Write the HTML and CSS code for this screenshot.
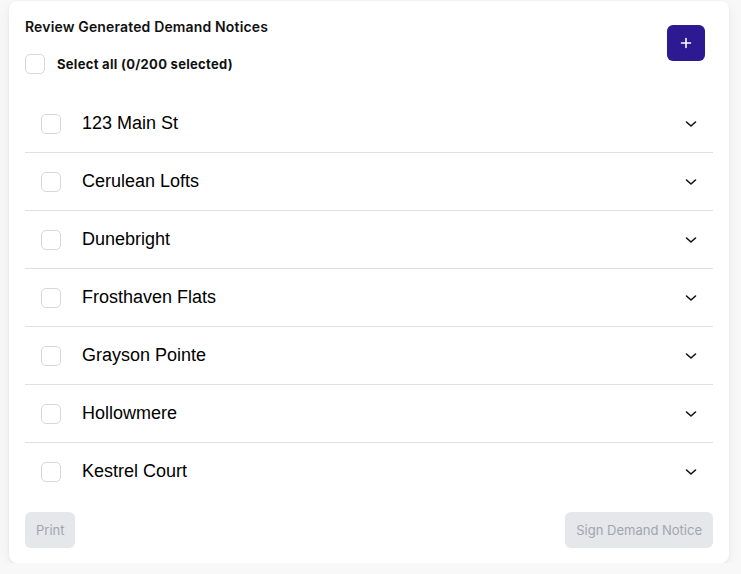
FILE: index.html
```html
<!DOCTYPE html>
<html lang="en">
  <head>
    <meta charset="UTF-8" />
    <meta name="viewport" content="width=device-width, initial-scale=1.0" />
    <title>Review Generated Demand Notices</title>
    <link rel="stylesheet" href="styles.css">
  </head>

  <body>
    <div class="card">
      <div class="card-header">
        <div class="header-text">
          <h2 class="title">Review Generated Demand Notices</h2>
          <label class="select-all">
            <span class="checkbox"></span>
            <span>Select all (0/200 selected)</span>
          </label>
        </div>
        <button class="add-button" aria-label="Add">
          <svg width="12" height="12" viewBox="0 0 12 12">
            <path d="M6 1.5v9M1.5 6h9" stroke="#fff" stroke-width="1.6" stroke-linecap="round" />
          </svg>
        </button>
      </div>

      <ul class="notice-list">
        <li class="notice-row">
          <span class="checkbox"></span>
          <span class="notice-name">123 Main St</span>
          <svg class="chevron" width="12" height="8" viewBox="0 0 12 8"><path d="M1.5 2l4.5 4 4.5-4" /></svg>
        </li>
        <li class="notice-row">
          <span class="checkbox"></span>
          <span class="notice-name">Cerulean Lofts</span>
          <svg class="chevron" width="12" height="8" viewBox="0 0 12 8"><path d="M1.5 2l4.5 4 4.5-4" /></svg>
        </li>
        <li class="notice-row">
          <span class="checkbox"></span>
          <span class="notice-name">Dunebright</span>
          <svg class="chevron" width="12" height="8" viewBox="0 0 12 8"><path d="M1.5 2l4.5 4 4.5-4" /></svg>
        </li>
        <li class="notice-row">
          <span class="checkbox"></span>
          <span class="notice-name">Frosthaven Flats</span>
          <svg class="chevron" width="12" height="8" viewBox="0 0 12 8"><path d="M1.5 2l4.5 4 4.5-4" /></svg>
        </li>
        <li class="notice-row">
          <span class="checkbox"></span>
          <span class="notice-name">Grayson Pointe</span>
          <svg class="chevron" width="12" height="8" viewBox="0 0 12 8"><path d="M1.5 2l4.5 4 4.5-4" /></svg>
        </li>
        <li class="notice-row">
          <span class="checkbox"></span>
          <span class="notice-name">Hollowmere</span>
          <svg class="chevron" width="12" height="8" viewBox="0 0 12 8"><path d="M1.5 2l4.5 4 4.5-4" /></svg>
        </li>
        <li class="notice-row">
          <span class="checkbox"></span>
          <span class="notice-name">Kestrel Court</span>
          <svg class="chevron" width="12" height="8" viewBox="0 0 12 8"><path d="M1.5 2l4.5 4 4.5-4" /></svg>
        </li>
      </ul>

      <div class="card-footer">
        <button class="muted-button" disabled>Print</button>
        <button class="muted-button" disabled>Sign Demand Notice</button>
      </div>
    </div>
  </body>
</html>
```

FILE: styles.css
```css
body {
  margin: 0;
  background-color: #f8f8f9;
  font-family: Inter, "Noto Sans", sans-serif;
  color: #111;
}

.card {
  width: 720px;
  margin: 1px 0 0 9px;
  padding: 16px 16px 15px;
  box-sizing: border-box;
  background-color: #fff;
  border-radius: 8px;
  box-shadow: 0 1px 3px rgba(0, 0, 0, 0.06), 0 4px 14px rgba(0, 0, 0, 0.05);
}

.card-header {
  display: flex;
  justify-content: space-between;
  align-items: flex-start;
  padding-right: 8px;
}

.header-text {
  display: flex;
  flex-direction: column;
  gap: 17px;
}

.title {
  margin: 0;
  font-size: 14px;
  line-height: 20px;
  font-weight: 600;
  letter-spacing: 0.15px;
  color: #111;
}

.select-all {
  display: flex;
  align-items: center;
  gap: 12px;
  font-size: 13px;
  font-weight: 700;
  letter-spacing: 0.3px;
  line-height: 20px;
}

.checkbox {
  width: 20px;
  height: 20px;
  box-sizing: border-box;
  border: 1px solid #d4d8de;
  border-radius: 5px;
  background-color: #fff;
  flex-shrink: 0;
}

.add-button {
  width: 38px;
  height: 36px;
  margin-top: 8px;
  border: none;
  border-radius: 6px;
  background-color: #2d1991;
  display: flex;
  align-items: center;
  justify-content: center;
  cursor: pointer;
}

.notice-list {
  list-style: none;
  margin: 21px 0 0;
  padding: 0;
}

.notice-row {
  display: flex;
  align-items: center;
  height: 57px;
  padding: 0 16px;
  border-bottom: 1px solid #dde1e6;
}

.notice-row:last-child {
  border-bottom: none;
}

.notice-name {
  flex: 1;
  margin-left: 21px;
  font-family: "Liberation Sans", Arial, sans-serif;
  font-size: 18px;
  color: #000;
}

.chevron {
  fill: none;
  stroke: #111;
  stroke-width: 1.6;
  stroke-linecap: round;
  stroke-linejoin: round;
}

.card-footer {
  display: flex;
  justify-content: space-between;
  margin-top: 12px;
}

.muted-button {
  height: 36px;
  padding: 0 11px;
  border: none;
  border-radius: 6px;
  background-color: #e5e7eb;
  color: #a1a6ae;
  font-family: Inter, "Noto Sans", sans-serif;
  font-size: 13px;
}
```
